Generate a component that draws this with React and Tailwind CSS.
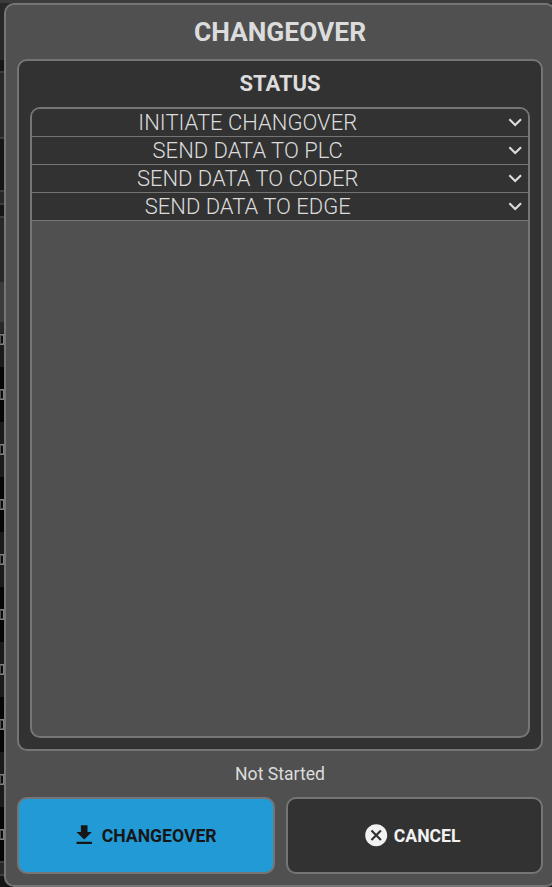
import { MdCancel, MdDownload, MdExpandMore } from "react-icons/md";

const steps = [
  "INITIATE CHANGOVER",
  "SEND DATA TO PLC",
  "SEND DATA TO CODER",
  "SEND DATA TO EDGE",
];

// Rows of the table behind the dialog.
const rows = [
  "h-[55px] bg-[#060606]",
  "h-[55px] bg-[#1b1b1b]",
  "h-[55px] bg-[#060606]",
  "h-[55px] bg-[#1b1b1b]",
  "h-[55px] bg-[#060606]",
  "h-[55px] bg-[#1b1b1b]",
  "h-[55px] bg-[#060606]",
  "h-[55px] bg-[#1b1b1b]",
  "h-[54px] bg-[#060606]",
];

function Box() {
  return (
    <div className="h-[11px] w-1 border-y border-r border-[#808080] bg-[#505050]">
      <div className="ml-px h-[9px] w-[2px] border-y border-[#505050] bg-[#0a0a0a]" />
    </div>
  );
}

function Backdrop() {
  return (
    <div className="h-[887px] w-full overflow-hidden bg-[#282828]">
      <div className="h-[3px] bg-[#3c3c3c]" />
      <div className="h-[57px]" />
      <div className="h-[11px] bg-[#161616]" />
      <div className="h-[66px] border-t-2 border-[#3d3d3d]" />
      <div className="h-[53px] border-t-2 border-[#3d3d3d] bg-[#161616]" />
      <div className="h-[15px] border-y-2 border-[#3d3d3d]" />
      <div className="h-[11px] bg-[#161616]" />
      <div className="h-[66px] border-t-2 border-[#3d3d3d]" />
      <div className="h-[40px] bg-[#3b3b3b]" />
      <div className="h-[11px]" />
      <div className="h-[34px] bg-[#1b1b1b] pt-px"><Box /></div>
      {rows.map((row, i) => (
        <div key={i} className={row}>
          <div className="pt-[22px]"><Box /></div>
        </div>
      ))}
      <div className="h-[15px] border-y-2 border-[#3d3d3d]" />
      <div className="h-3 bg-[#161616]" />
    </div>
  );
}

export default function App() {
  return (
    <div className="relative h-[887px] w-[552px] overflow-hidden font-['Roboto',sans-serif]">
      <Backdrop />
      <div className="absolute left-1 top-[3px] flex h-[884px] w-[552px] flex-col rounded-[10px] border-2 border-[#757575] bg-[#505050] px-[11px] pb-[11px]">
        <h1 className="h-[54px] text-center text-[26.4px] font-bold leading-[54px] text-[#dcdcdc]">CHANGEOVER</h1>
        <section className="flex h-[692px] flex-col rounded-[10px] border-2 border-[#757575] bg-[#323232] px-[11px] pb-[11px]">
          <h2 className="h-[46px] text-center text-[22px] font-bold leading-[46px] text-[#dcdcdc]">STATUS</h2>
          <div className="flex-1 overflow-hidden rounded-[10px] border-2 border-[#757575] bg-[#505050]">
            {steps.map((step) => (
              <div key={step} className="flex h-7 items-start border-b border-[#757575] bg-[#323232] text-[#dcdcdc]">
                <span className="flex-1 pl-[7.5px] text-center text-[22px] font-light leading-[27px]">{step}</span>
                <div className="flex w-[72px] justify-end">
                  <MdExpandMore className="size-[26.4px]" />
                </div>
              </div>
            ))}
          </div>
        </section>
        <p className="h-[46px] text-center text-[17.6px] leading-[46px] text-[#dcdcdc]">Not Started</p>
        <div className="flex h-[77px] gap-[11px]">
          <button className="flex w-[258px] items-center justify-center gap-1 rounded-[10px] border-2 border-[#757575] bg-[#229ad6] pr-1 text-[17.6px] font-bold text-[#161616]">
            <MdDownload className="size-[26.4px]" />
            <span className="pt-px">CHANGEOVER</span>
          </button>
          <button className="flex flex-1 items-center justify-center gap-1 rounded-[10px] border-2 border-[#757575] bg-[#323232] pr-[5px] text-[17.6px] font-bold text-[#f2f2f2]">
            <MdCancel className="size-[26.4px]" />
            <span className="pt-px">CANCEL</span>
          </button>
        </div>
      </div>
    </div>
  );
}
